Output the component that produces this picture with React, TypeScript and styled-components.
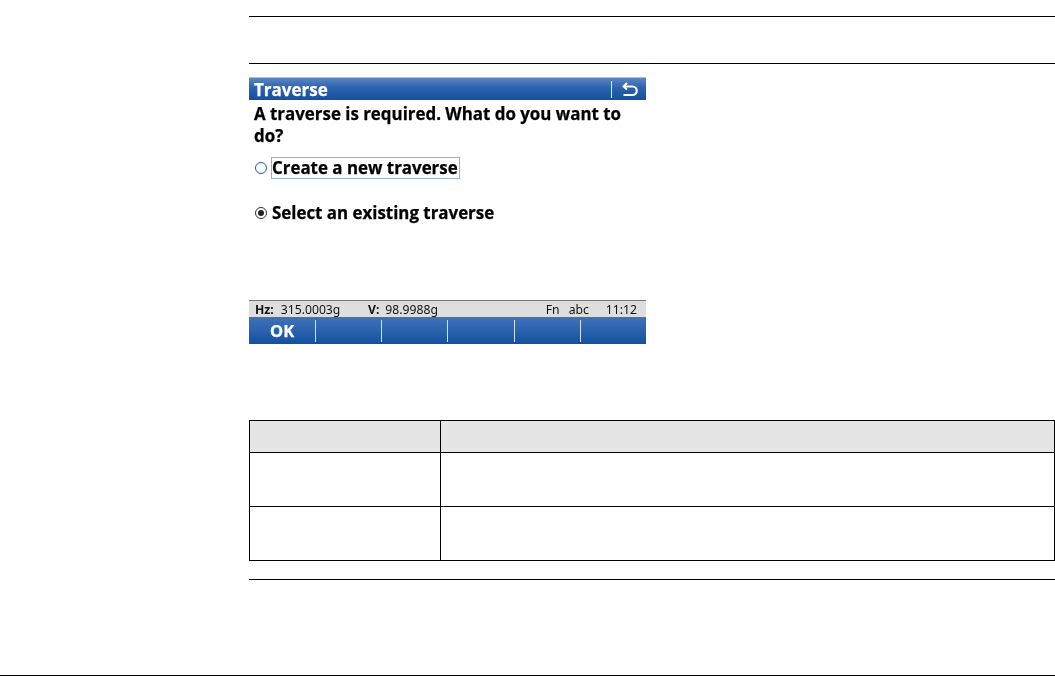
import React from "react";
import styled, { createGlobalStyle } from "styled-components";

const Global = createGlobalStyle`
  html, body { margin: 0; padding: 0; background: #fff; }
  #root { width: 1055px; height: 676px; overflow: hidden; }
`;

const Page = styled.div`
  width: 1055px;
  height: 676px;
  display: flex;
  flex-direction: column;
  background: #fff;
  font-family: "Liberation Sans", Arial, sans-serif;
`;

const Content = styled.main`
  flex: 1;
  display: flex;
  flex-direction: column;
  padding: 16px 0 0 249px;
`;

const Rule = styled.hr<{ $gap: number }>`
  margin: 0 0 ${(p) => p.$gap}px;
  border: 0;
  height: 1px;
  background: #000;
`;

const Screen = styled.section`
  width: 397px;
  height: 267px;
  display: flex;
  flex-direction: column;
  font-family: "Open Sans", sans-serif;
  color: #000;
  filter: blur(0.35px);
  margin-bottom: 76px;
`;

const TitleBar = styled.header`
  height: 23px;
  flex: none;
  display: flex;
  align-items: center;
  justify-content: space-between;
  padding: 0 8px 0 5px;
  box-sizing: border-box;
  border-top: 1px solid #b9bcc2;
  background: linear-gradient(#5c86c2, #2a62ae 45%, #14509f);
  color: #fff;
  font-weight: 700;
  font-size: 17px;
  -webkit-text-stroke: 0.25px #fff;
`;

const TitleActions = styled.div`
  display: flex;
  align-items: center;
  gap: 9px;
`;

const TitleDivider = styled.span`
  width: 1px;
  height: 17px;
  background: #dfe8f4;
`;

const Body = styled.div`
  flex: 1;
  display: flex;
  flex-direction: column;
  padding: 3px 0 0 5px;
`;

const Question = styled.p`
  margin: 0 0 10px;
  width: 385px;
  font-weight: 700;
  font-size: 16.9px;
  line-height: 22px;
  -webkit-text-stroke: 0.25px #000;
`;

const Option = styled.div<{ $gap: number }>`
  display: flex;
  align-items: center;
  gap: 4px;
  height: 22px;
  margin-bottom: ${(p) => p.$gap}px;
`;

const Radio = styled.span<{ $checked?: boolean }>`
  width: 12px;
  height: 12px;
  margin-left: 1px;
  flex: none;
  box-sizing: border-box;
  border-radius: 50%;
  border: 1.5px solid ${(p) => (p.$checked ? "#333" : "#1f5a9e")};
  display: flex;
  align-items: center;
  justify-content: center;
  &::after {
    content: "";
    width: 6px;
    height: 6px;
    border-radius: 50%;
    background: ${(p) => (p.$checked ? "#222" : "transparent")};
  }
`;

const OptionLabel = styled.span<{ $focused?: boolean }>`
  font-weight: 700;
  font-size: 16.9px;
  line-height: 20px;
  padding: 0 1px 0 0;
  border: 1px solid ${(p) => (p.$focused ? "#8fb2d6" : "transparent")};
  -webkit-text-stroke: 0.25px #000;
`;

const StatusBar = styled.div`
  height: 17px;
  flex: none;
  display: flex;
  align-items: center;
  box-sizing: border-box;
  border-top: 1px solid #777;
  background: #dedede;
  padding: 0 9px 0 6px;
  font-size: 12.2px;
  font-family: "Noto Sans", sans-serif;
  color: #111;
  white-space: nowrap;
`;

const Reading = styled.span<{ $width: number; $labelGap: number }>`
  width: ${(p) => p.$width}px;
  flex: none;
  b { margin-right: ${(p) => p.$labelGap}px; }
`;

const StatusRight = styled.span`
  margin-left: auto;
  display: flex;
  gap: 9px;
`;

const Clock = styled.span`
  margin-left: 8px;
`;

const SoftKeys = styled.div`
  height: 27px;
  flex: none;
  display: grid;
  grid-template-columns: repeat(6, 1fr);
  background: linear-gradient(#3f72b8, #2a62ae 50%, #12509f);
`;

const SoftKey = styled.div`
  color: #fff;
  font-weight: 700;
  font-size: 16.5px;
  -webkit-text-stroke: 0.25px #fff;
  display: flex;
  align-items: center;
  justify-content: center;
  position: relative;
  &:not(:last-child)::after {
    content: "";
    position: absolute;
    right: -1px;
    top: 3px;
    height: 22px;
    width: 1px;
    background: #d5e0ef;
  }
`;

const Table = styled.table`
  width: 806px;
  border-collapse: collapse;
  table-layout: fixed;
  margin-bottom: 18px;
`;

const HeadCell = styled.th<{ $width?: number }>`
  height: 32px;
  padding: 0;
  box-sizing: border-box;
  background: #e5e5e5;
  border: 1px solid #000;
  ${(p) => (p.$width ? `width: ${p.$width}px;` : "")}
`;

const Cell = styled.td`
  height: 54px;
  padding: 0;
  box-sizing: border-box;
  border: 1px solid #000;
`;

const PageFoot = styled.footer`
  height: 1px;
  flex: none;
  background: #000;
`;

function BackIcon() {
  return (
    <svg width="17" height="17" viewBox="0 0 17 17" fill="none" stroke="#fff">
      <path d="M3 5.5h8.5a4 4 0 0 1 0 8.5H2.5" strokeWidth="2.2" />
      <path d="M6 2 2.5 5.5 6 8.5" strokeWidth="2" />
    </svg>
  );
}

export default function App() {
  return (
    <Page>
      <Global />
      <Content>
        <Rule $gap={46} />
        <Rule $gap={13} />
        <Screen>
          <TitleBar>
            <span>Traverse</span>
            <TitleActions>
              <TitleDivider />
              <BackIcon />
            </TitleActions>
          </TitleBar>
          <Body>
            <Question>A traverse is required. What do you want to do?</Question>
            <Option $gap={23}>
              <Radio />
              <OptionLabel $focused>Create a new traverse</OptionLabel>
            </Option>
            <Option $gap={0}>
              <Radio $checked />
              <OptionLabel>Select an existing traverse</OptionLabel>
            </Option>
          </Body>
          <StatusBar>
            <Reading $width={113} $labelGap={7}><b>Hz:</b>315.0003g</Reading>
            <Reading $width={100} $labelGap={6}><b>V:</b>98.9988g</Reading>
            <StatusRight>
              <span>Fn</span>
              <span>abc</span>
              <Clock>11:12</Clock>
            </StatusRight>
          </StatusBar>
          <SoftKeys>
            <SoftKey>OK</SoftKey>
            <SoftKey />
            <SoftKey />
            <SoftKey />
            <SoftKey />
            <SoftKey />
          </SoftKeys>
        </Screen>
        <Table>
          <thead>
            <tr>
              <HeadCell $width={191} />
              <HeadCell />
            </tr>
          </thead>
          <tbody>
            <tr><Cell /><Cell /></tr>
            <tr><Cell /><Cell /></tr>
          </tbody>
        </Table>
        <Rule $gap={0} />
      </Content>
      <PageFoot />
    </Page>
  );
}
